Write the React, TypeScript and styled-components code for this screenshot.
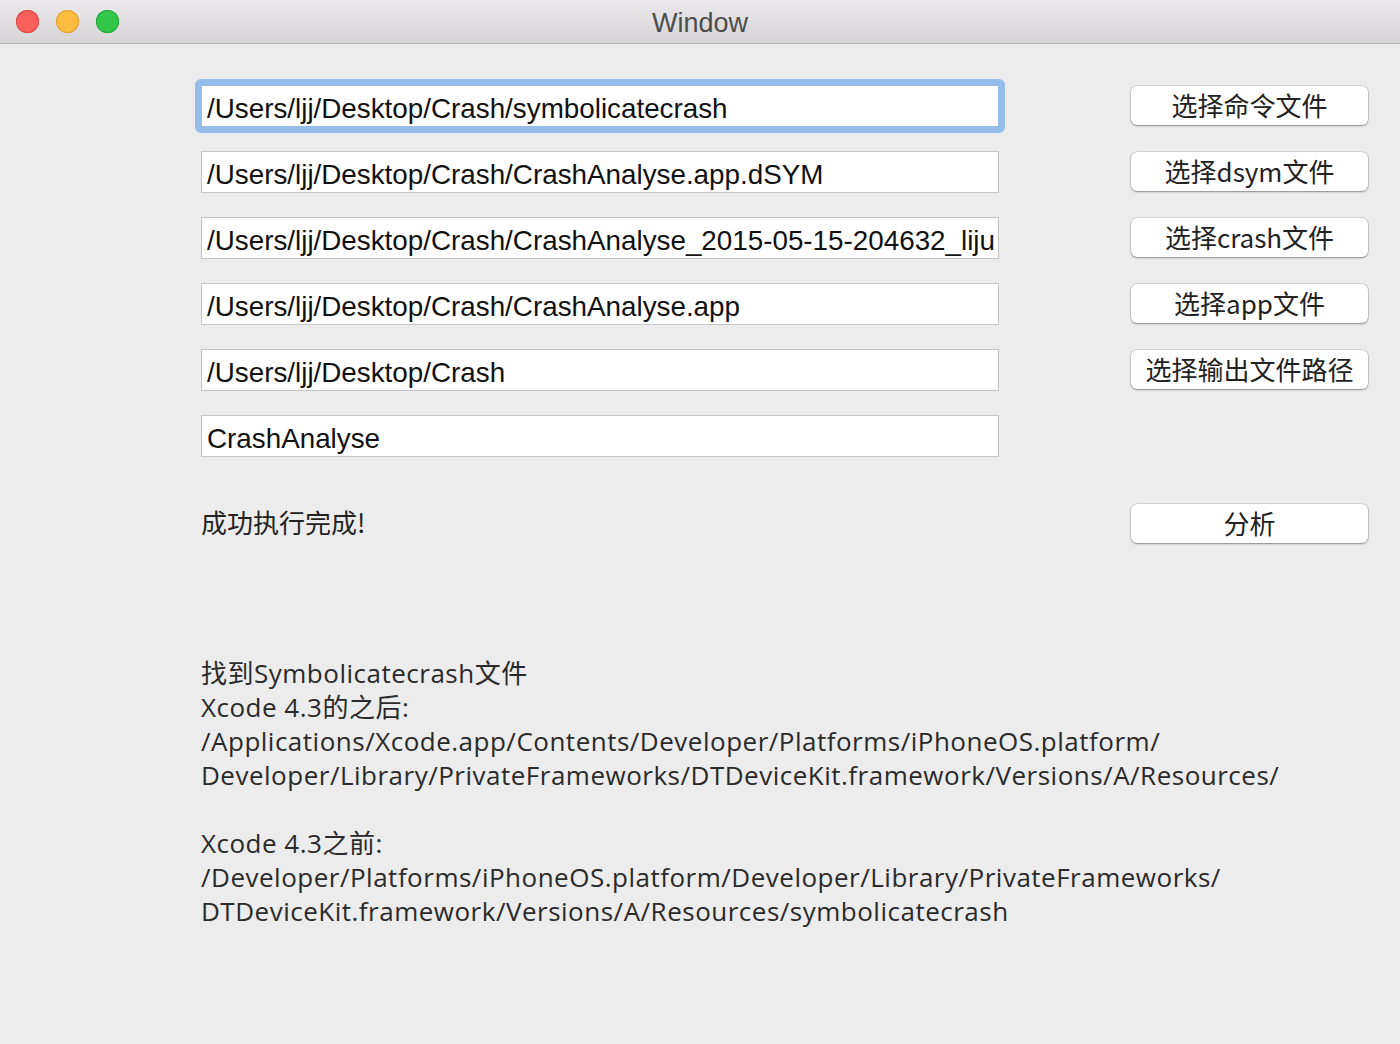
import React from "react";
import styled, { createGlobalStyle } from "styled-components";

const Global = createGlobalStyle`
  html, body { margin: 0; padding: 0; background: #ececec; }
  body { font-family: "Liberation Sans", "Noto Sans CJK SC", sans-serif; }
`;

const Window = styled.div`
  width: 1400px;
  height: 1044px;
  background: #ececec;
  display: flex;
  flex-direction: column;
  overflow: hidden;
`;

const TitleBar = styled.div`
  height: 43px;
  flex: none;
  border-bottom: 1px solid #b9b8b9;
  background: linear-gradient(#ebe9eb, #d5d3d5);
  display: flex;
  align-items: center;
  position: relative;
`;

const Lights = styled.div`
  display: flex;
  gap: 17px;
  padding-left: 16px;
`;

const Light = styled.div<{ $c: string; $b: string }>`
  width: 23px;
  height: 23px;
  border-radius: 50%;
  background: ${(p) => p.$c};
  box-shadow: inset 0 0 0 1px ${(p) => p.$b};
`;

const Title = styled.div`
  position: absolute;
  left: 0;
  right: 0;
  top: 8px;
  text-align: center;
  font-family: "Liberation Sans", sans-serif;
  font-size: 27px;
  line-height: 30px;
  color: #4d4d4d;
  pointer-events: none;
`;

const Content = styled.div`
  padding: 41px 0 0 201px;
  display: grid;
  grid-template-columns: 798px 237px;
  column-gap: 132px;
  row-gap: 24px;
  align-items: start;
`;

const Field = styled.div<{ $focus?: boolean }>`
  position: relative;
  height: 42px;
  box-sizing: border-box;
  background: #fff;
  border: 1px solid ${(p) => (p.$focus ? "#9ab9e2" : "#c4c4c4")};
  font-family: "Liberation Sans", "Arial", sans-serif;
  font-size: 27.8px;
  color: #111;
  padding: 0 0 0 5px;
  line-height: 42px;
  white-space: nowrap;
  ${(p) =>
    p.$focus
      ? `&::before {
    content: "";
    position: absolute;
    inset: -7px;
    border: 6px solid #94bdea;
    border-radius: 6px;
    pointer-events: none;
  }`
      : ""}
`;

const FieldText = styled.span`
  display: block;
  position: relative;
  top: 2px;
`;

const Button = styled.div`
  margin-top: 1px;
  height: 39px;
  box-sizing: border-box;
  background: #fff;
  border-radius: 6px;
  box-shadow: 0 0 0 0.5px rgba(0,0,0,0.2), 0 1px 2px rgba(0,0,0,0.35);
  font-family: "Noto Sans CJK SC", "Liberation Sans", sans-serif;
  font-size: 26px;
  color: #222;
  display: flex;
  align-items: center;
  justify-content: center;
  line-height: 1;
  padding-bottom: 2px;
`;

const Empty = styled.div``;

const StatusRow = styled.div`
  grid-column: 1 / -1;
  display: grid;
  grid-template-columns: 798px 237px;
  column-gap: 132px;
  align-items: center;
  margin-top: 22px;
`;

const Status = styled.div`
  font-family: "Noto Sans CJK SC", sans-serif;
  font-size: 26px;
  color: #222;
  line-height: 1;
  padding-bottom: 3px;
`;

const Log = styled.div`
  padding: 113px 0 0 201px;
  font-family: "Open Sans", "Noto Sans CJK SC", sans-serif;
  font-size: 26px;
  letter-spacing: 0.5px;
  line-height: 34px;
  color: #2a2a2a;
  white-space: pre;
`;

const fields = [
  { v: "/Users/ljj/Desktop/Crash/symbolicatecrash", b: "选择命令文件", focus: true },
  { v: "/Users/ljj/Desktop/Crash/CrashAnalyse.app.dSYM", b: "选择dsym文件" },
  { v: "/Users/ljj/Desktop/Crash/CrashAnalyse_2015-05-15-204632_liju", b: "选择crash文件" },
  { v: "/Users/ljj/Desktop/Crash/CrashAnalyse.app", b: "选择app文件" },
  { v: "/Users/ljj/Desktop/Crash", b: "选择输出文件路径" },
  { v: "CrashAnalyse", b: "" },
];

const logText = `找到Symbolicatecrash文件
Xcode 4.3的之后:
/Applications/Xcode.app/Contents/Developer/Platforms/iPhoneOS.platform/
Developer/Library/PrivateFrameworks/DTDeviceKit.framework/Versions/A/Resources/

Xcode 4.3之前:
/Developer/Platforms/iPhoneOS.platform/Developer/Library/PrivateFrameworks/
DTDeviceKit.framework/Versions/A/Resources/symbolicatecrash`;

export default function App() {
  return (
    <Window>
      <Global />
      <TitleBar>
        <Lights>
          <Light $c="#fc605c" $b="#de4a45" />
          <Light $c="#fdbc40" $b="#dea236" />
          <Light $c="#34c84a" $b="#27a83a" />
        </Lights>
        <Title>Window</Title>
      </TitleBar>
      <Content>
        {fields.map((f, i) => (
          <React.Fragment key={i}>
            <Field $focus={f.focus}>
              <FieldText>{f.v}</FieldText>
            </Field>
            {f.b ? <Button>{f.b}</Button> : <Empty />}
          </React.Fragment>
        ))}
        <StatusRow>
          <Status>成功执行完成!</Status>
          <Button>分析</Button>
        </StatusRow>
      </Content>
      <Log>{logText}</Log>
    </Window>
  );
}
